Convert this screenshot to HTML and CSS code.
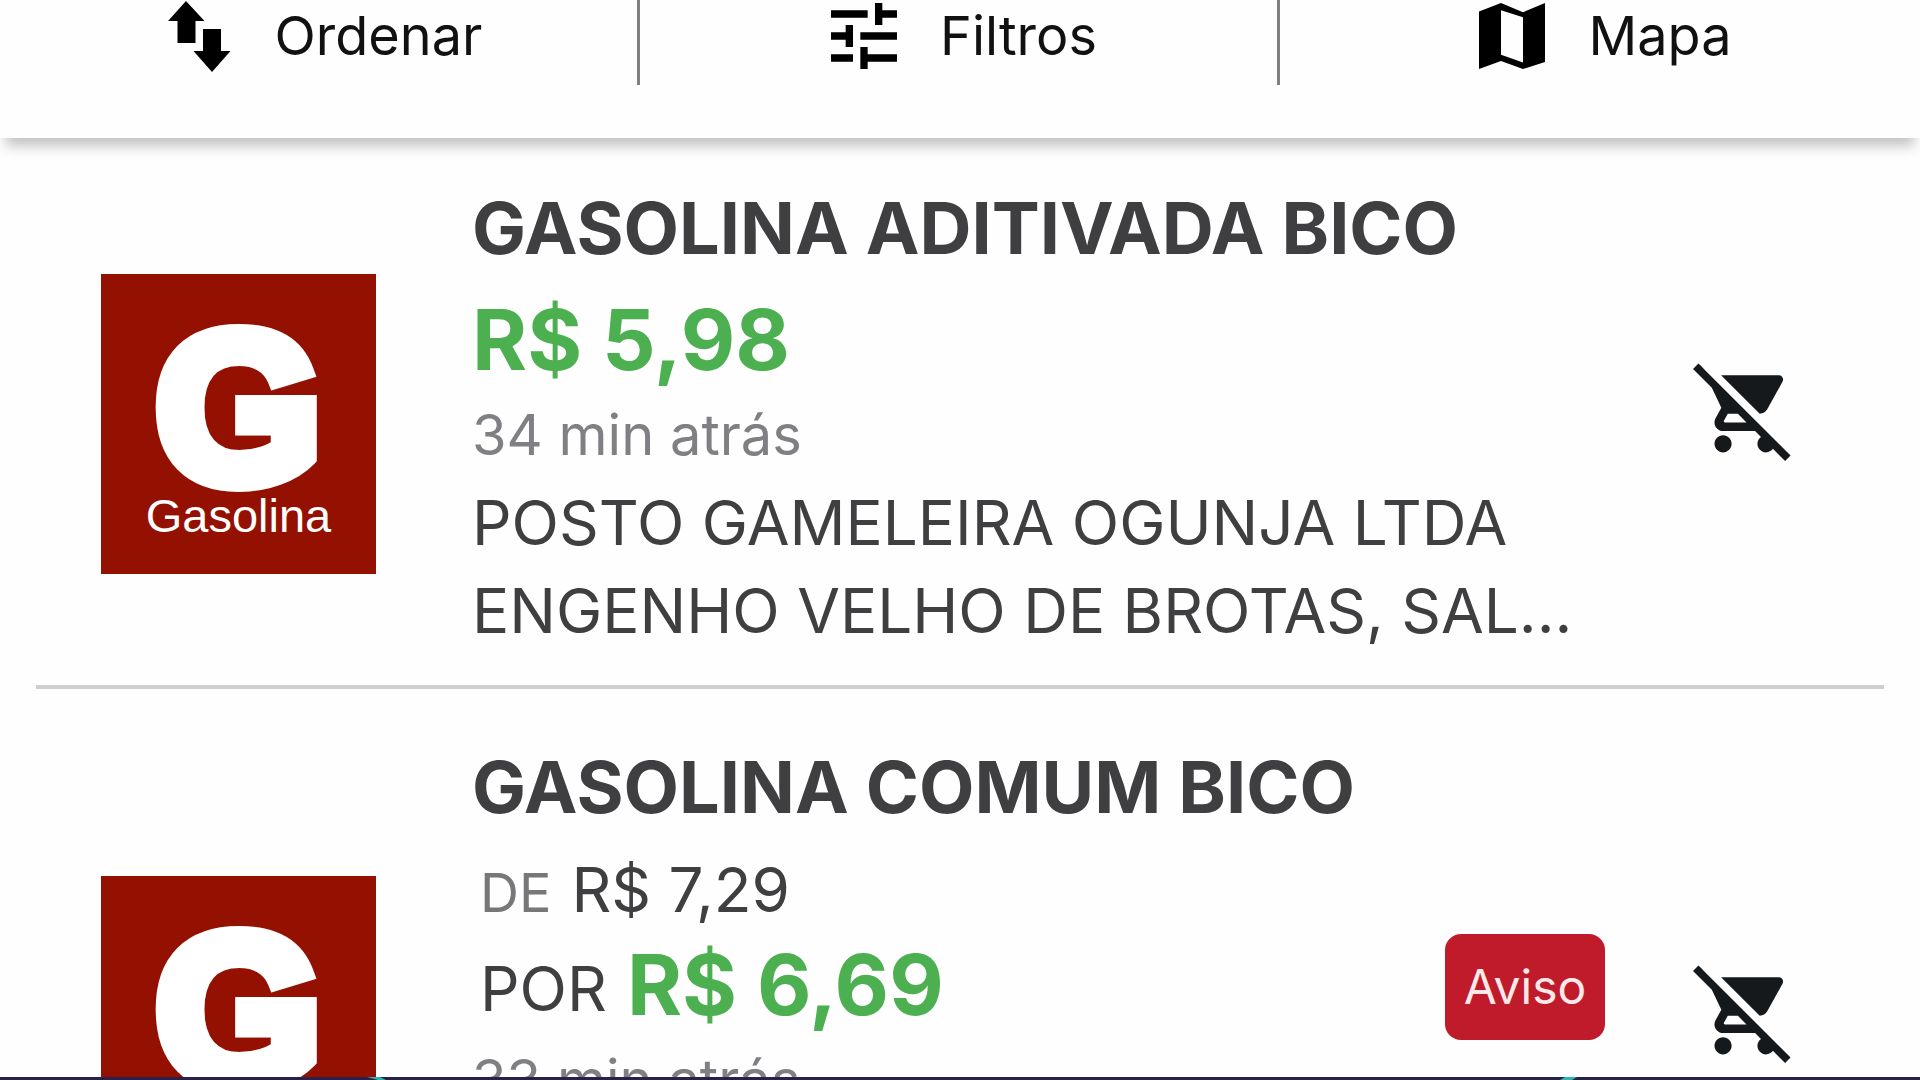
FILE: index.html
```html
<!DOCTYPE html>
<html lang="pt-BR">
<head>
<meta charset="utf-8">
<meta name="viewport" content="width=device-width, initial-scale=1">
<title>Gasolina</title>
<link rel="stylesheet" href="styles.css">
</head>
<body>
<header class="toolbar">
  <button class="tool" type="button">
    <svg class="tool-icon" viewBox="0 0 88 88" aria-hidden="true"><path d="M31 9L49.500 29H40.500V51H22.500V29H13ZM48 37H66V59H75.500L57 80 38.500 59H48Z"/></svg>
    <span>Ordenar</span>
  </button>
  <button class="tool" type="button">
    <svg class="tool-icon" viewBox="0 0 24 24" aria-hidden="true"><path d="M3 17v2h6v-2H3zM3 5v2h10V5H3zm10 16v-2h8v-2h-8v-2h-2v6h2zM7 9v2H3v2h4v2h2V9H7zm14 4v-2H11v2h10zm-6-4h2V7h4V5h-4V3h-2v6z"/></svg>
    <span>Filtros</span>
  </button>
  <button class="tool" type="button">
    <svg class="tool-icon" viewBox="0 0 24 24" aria-hidden="true"><path fill-rule="evenodd" d="M3 5.300L9 3l6 2.500L21 3v16.100L15 21l-6-2.200L3 21zM9 5v12.100l6 2.100V6.900z"/></svg>
    <span>Mapa</span>
  </button>
</header>

<main class="list">
  <article class="offer">
    <div class="logo"><span class="logo-letter">G</span><span class="logo-name">Gasolina</span></div>
    <div class="info">
      <h2 class="title">GASOLINA ADITIVADA BICO</h2>
      <p class="price price-line">R$ 5,98</p>
      <p class="time">34 min atrás</p>
      <p class="place">POSTO GAMELEIRA OGUNJA LTDA</p>
      <p class="place">ENGENHO VELHO DE BROTAS, SAL...</p>
    </div>
    <button class="cart" type="button" aria-label="Remover do carrinho">
      <svg class="cart-icon" viewBox="0 0 24 24" aria-hidden="true"><path d="M22.730 22.730L2.770 2.770 2 2l-.73-.73L0 2.540l4.390 4.390 2.210 4.660-1.350 2.450c-.16.28-.25.61-.25.96 0 1.100.9 2 2 2h7.460l1.380 1.380c-.5.36-.83.95-.83 1.620 0 1.100.89 2 1.990 2 .67 0 1.260-.33 1.620-.84L21.460 24l1.270-1.270zM7.420 15c-.14 0-.25-.11-.25-.25l.03-.12.9-1.630h2.360l2 2H7.420zm8.130-2c.75 0 1.410-.41 1.750-1.030l3.580-6.490c.08-.14.12-.31.12-.48 0-.55-.45-1-1-1H6.540l9.010 9zM7 18c-1.100 0-1.990.9-1.990 2S5.900 22 7 22s2-.9 2-2-.9-2-2-2z"/></svg>
    </button>
  </article>

  <article class="offer">
    <div class="logo"><span class="logo-letter">G</span><span class="logo-name">Gasolina</span></div>
    <div class="info">
      <h2 class="title">GASOLINA COMUM BICO</h2>
      <p class="promo promo-from"><span class="label">DE</span><span class="old-price">R$ 7,29</span></p>
      <p class="promo promo-to"><span class="old-price">POR</span><span class="price">R$ 6,69</span></p>
      <p class="time">33 min atrás</p>
      <p class="place">&nbsp;</p>
      <p class="place">&nbsp;</p>
    </div>
    <button class="notice" type="button">Aviso</button>
    <button class="cart" type="button" aria-label="Remover do carrinho">
      <svg class="cart-icon" viewBox="0 0 24 24" aria-hidden="true"><path d="M22.730 22.730L2.770 2.770 2 2l-.73-.73L0 2.540l4.390 4.390 2.210 4.660-1.350 2.450c-.16.28-.25.61-.25.96 0 1.100.9 2 2 2h7.460l1.380 1.380c-.5.36-.83.95-.83 1.620 0 1.100.89 2 1.990 2 .67 0 1.260-.33 1.620-.84L21.460 24l1.270-1.270zM7.420 15c-.14 0-.25-.11-.25-.25l.03-.12.9-1.630h2.360l2 2H7.420zm8.130-2c.75 0 1.410-.41 1.750-1.030l3.580-6.490c.08-.14.12-.31.12-.48 0-.55-.45-1-1-1H6.540l9.010 9zM7 18c-1.100 0-1.990.9-1.990 2S5.900 22 7 22s2-.9 2-2-.9-2-2-2z"/></svg>
    </button>
  </article>
</main>

<footer class="edge">
  <svg class="edge-art" viewBox="0 0 1920 3" preserveAspectRatio="none" aria-hidden="true"><path d="M367 0h13l6 3h-8zM1565 0h12l-5 3h-12z"/></svg>
</footer>
</body>
</html>
```
FILE: styles.css
```css
* {
  box-sizing: border-box;
}

body {
  margin: 0;
  height: 100vh;
  display: flex;
  flex-direction: column;
  overflow: hidden;
  background: #fefefe;
  color: #3f3f41;
  font-family: Inter, "Liberation Sans", sans-serif;
}

h2,
p {
  margin: 0;
}

button {
  border: 0;
  padding: 0;
  background: none;
  color: inherit;
  font-family: inherit;
}

/* Toolbar */
.toolbar {
  position: relative;
  z-index: 1;
  flex: none;
  display: grid;
  grid-template-columns: repeat(3, 1fr);
  padding-bottom: 53px;
  background: #fefefe;
  box-shadow: 0 14px 12px -6px rgba(0, 0, 0, 0.24);
}

.tool {
  height: 85px;
  padding-bottom: 14px;
  display: flex;
  align-items: center;
  justify-content: center;
  gap: 32px;
  color: #111;
  font-size: 54px;
  line-height: 64px;
}

.tool:not(:last-child) {
  border-right: 3px solid #808080;
}

.tool-icon {
  flex: none;
  width: 88px;
  height: 88px;
  fill: #000;
}

/* Offers */
.list {
  flex: 1;
  min-height: 0;
  margin-top: -8px;
  padding: 0 36px;
  overflow: hidden;
}

.offer {
  display: flex;
  align-items: center;
  padding: 58px 88px 30px 65px;
  border-bottom: 4px solid #cfcfd1;
}

.logo {
  flex: none;
  width: 275px;
  height: 300px;
  margin-top: 4px;
  margin-right: 96px;
  display: flex;
  flex-direction: column;
  align-items: center;
  padding-top: 50px;
  background: #941000;
  color: #fff;
  font-family: "Liberation Sans", Arial, sans-serif;
}

.logo-letter {
  font-size: 212px;
  font-weight: 700;
  line-height: 168px;
  -webkit-text-stroke: 18px #fff;
}

.logo-name {
  font-size: 47px;
  line-height: 48px;
}

.info {
  flex: 1;
  min-width: 0;
  white-space: nowrap;
}

.title {
  font-size: 72px;
  font-weight: 700;
  line-height: 80px;
}

.price {
  color: #4caf50;
  font-size: 84px;
  font-weight: 700;
  line-height: 96px;
}

.price-line {
  margin-top: 24px;
}

.time {
  margin-top: 15px;
  color: #808084;
  font-size: 56px;
  line-height: 64px;
}

.time + .place {
  margin-top: 12px;
}

.place {
  font-size: 62px;
  line-height: 88px;
}

.promo {
  display: flex;
  margin-left: 8px;
  gap: 20px;
}

.promo-from {
  margin-top: 19px;
  align-items: baseline;
}

.promo-to {
  margin-top: 3px;
  align-items: flex-end;
}

.label {
  color: #77777a;
  font-size: 54px;
}

.old-price {
  font-size: 62px;
  line-height: 88px;
}

.notice {
  flex: none;
  width: 160px;
  height: 106px;
  margin-bottom: 74px;
  border-radius: 16px;
  background: #c01b2b;
  color: #fde9ea;
  font-size: 48px;
}

.cart {
  flex: none;
  margin-bottom: 24px;
  margin-left: 88px;
  line-height: 0;
}

.cart-icon {
  width: 103px;
  height: 103px;
  fill: #15191c;
}

/* Bottom edge */
.edge {
  flex: none;
  height: 3px;
  background: #2a2148;
}

.edge-art {
  display: block;
  width: 100%;
  height: 3px;
  fill: #2fb5b0;
}
```
